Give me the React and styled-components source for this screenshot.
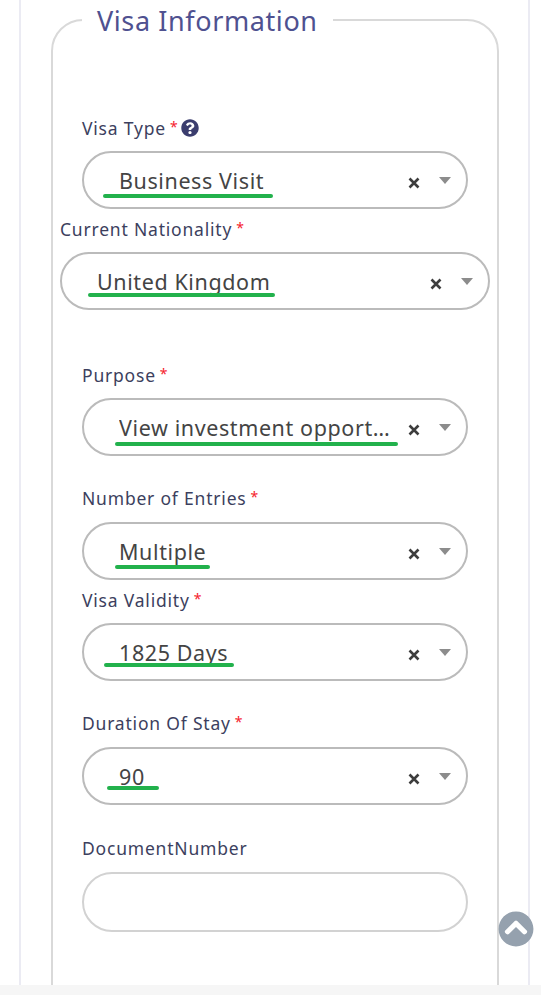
import React from "react";
import styled, { createGlobalStyle } from 'styled-components'
import { FaQuestionCircle, FaChevronCircleUp } from "react-icons/fa";

const GlobalStyle = createGlobalStyle`
html, body {
    margin:0;
    padding:0;
    height:100%;
    overflow:hidden;
    background:#fff;
    font-family:"Noto Sans", "Open Sans", sans-serif;
}
`

const Page = styled.div`
height:995px;
overflow:hidden;
display:flex;
flex-direction:column;
`

const Frame = styled.main`
height:985px;
flex:none;
box-sizing:border-box;
margin:0 11px 0 19px;
padding:0 30px;
border-left:2px solid #ebebf3;
border-right:2px solid #ebebf3;
overflow:hidden;
`

const BottomStrip = styled.div`
height:10px;
flex:none;
background:#f6f6f6;
`

const Fieldset = styled.fieldset`
box-sizing:border-box;
width:448px;
min-width:0;
min-height:1100px;
margin:0;
padding:0 29px;
border:2px solid #d9d9d9;
border-radius:32px;
`

const Legend = styled.legend`
margin-left:0;
padding:2px 15px 0;
font-size:27px;
line-height:38px;
letter-spacing:0.6px;
color:#4f5190;
`

const Field = styled.div`
margin-top:${props => props.$top}px;
margin-left:${props => props.$wide ? '-22px' : '0'};
margin-right:${props => props.$wide ? '-22px' : '0'};
`

const Label = styled.label`
display:flex;
align-items:center;
box-sizing:border-box;
height:24px;
padding-top:2px;
margin-bottom:${props => props.$gap}px;
font-size:17.5px;
letter-spacing:0.8px;
color:#3c3f5e;
`

const Required = styled.span`
align-self:flex-start;
margin-left:4px;
font-size:14px;
color:#f5222d;
`

const HelpIcon = styled(FaQuestionCircle)`
margin-left:3px;
margin-top:-1px;
font-size:18px;
color:#3b3d6e;
`

const Select = styled.div`
position:relative;
box-sizing:border-box;
height:${props => props.$empty ? 60 : 58}px;
display:flex;
align-items:center;
padding:0 12px 0 35px;
background:#fff;
border:2px solid ${props => props.$empty ? '#d2d2d2' : '#bbbbbb'};
border-radius:30px;
`

const Value = styled.span`
flex:1;
min-width:0;
margin-top:1px;
font-size:21.5px;
letter-spacing:0.6px;
color:#444;
white-space:nowrap;
overflow:hidden;
text-overflow:ellipsis;
`

const Clear = styled.svg`
flex:none;
width:12px;
height:12px;
margin:5px 0 0 14px;
`

const Caret = styled.span`
flex:none;
width:0;
height:0;
margin:0 3px 0 19px;
border-left:6px solid transparent;
border-right:6px solid transparent;
border-top:7px solid #8c8c8c;
`

// the green marks drawn over the values
const Underline = styled.span`
position:absolute;
left:${props => props.$left}px;
top:${props => props.$top}px;
width:${props => props.$width}px;
height:4px;
border-radius:2px;
background:#22b14c;
`

const ScrollTop = styled.button`
position:fixed;
left:498px;
top:911px;
width:36px;
height:36px;
padding:0;
border:none;
background:none;
display:flex;
color:#95a1ae;
`

const fields = [
    { label: 'Visa Type', help: true, value: 'Business Visit', top: 75, gap: 12, line: [19, 41, 170] },
    { label: 'Current Nationality', wide: true, value: 'United Kingdom', top: 7, gap: 12, line: [26, 39, 187] },
    { label: 'Purpose', value: 'View investment opportunities', top: 52, gap: 12, line: [31, 42, 283] },
    { label: 'Number of Entries', value: 'Multiple', top: 29, gap: 13, line: [31, 41, 95] },
    { label: 'Visa Validity', value: '1825 Days', top: 7, gap: 12, line: [20, 38, 130] },
    { label: 'Duration Of Stay', value: '90', top: 29, gap: 13, line: [23, 37, 52] },
    { label: 'DocumentNumber', notRequired: true, empty: true, top: 30, gap: 13 },
]

const App = () => {
    return (
        <Page>
            <GlobalStyle />
            <Frame>
                <Fieldset>
                    <Legend>Visa Information</Legend>
                    {fields.map(f => (
                        <Field key={f.label} $top={f.top} $wide={f.wide}>
                            <Label $gap={f.gap}>
                                {f.label}
                                {!f.notRequired && <Required>*</Required>}
                                {f.help && <HelpIcon />}
                            </Label>
                            <Select $empty={f.empty}>
                                {!f.empty && (
                                    <>
                                        <Value>{f.value}</Value>
                                        <Clear viewBox="0 0 12 12">
                                            <path d="M1.5 1.5L10.5 10.5M10.5 1.5L1.5 10.5" stroke="#3d3d3d" strokeWidth="2.6" />
                                        </Clear>
                                        <Caret />
                                        <Underline $left={f.line[0]} $top={f.line[1]} $width={f.line[2]} />
                                    </>
                                )}
                            </Select>
                        </Field>
                    ))}
                </Fieldset>
            </Frame>
            <BottomStrip />
            <ScrollTop>
                <FaChevronCircleUp size={36} />
            </ScrollTop>
        </Page>
    )
}

export default App
